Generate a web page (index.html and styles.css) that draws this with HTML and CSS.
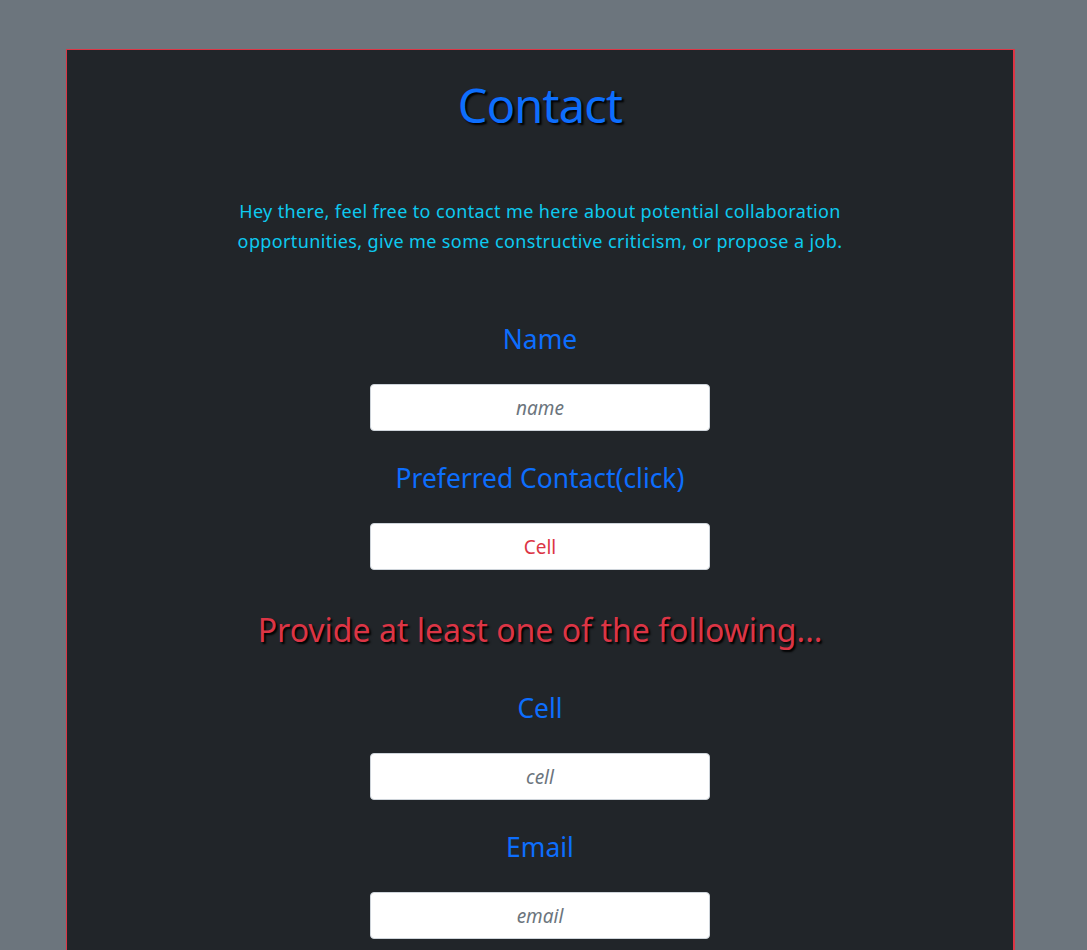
FILE: index.html
```html
<!DOCTYPE html>
<html lang="en">
<head>
<meta charset="utf-8">
<title>Contact</title>
<link rel="stylesheet" href="styles.css">
</head>
<body>
<main class="card">
  <h1 class="title">Contact</h1>
  <p class="intro">Hey there, feel free to contact me here about potential collaboration opportunities, give me some constructive criticism, or propose a job.</p>
  <form class="form">
    <div class="field">
      <label class="label" for="name">Name</label>
      <input class="input" id="name" type="text" placeholder="name">
    </div>
    <div class="field">
      <label class="label" for="pref">Preferred Contact(click)</label>
      <button class="input choice" id="pref" type="button">Cell</button>
    </div>
    <h2 class="warning">Provide at least one of the following...</h2>
    <div class="field">
      <label class="label" for="cell">Cell</label>
      <input class="input" id="cell" type="text" placeholder="cell">
    </div>
    <div class="field">
      <label class="label" for="email">Email</label>
      <input class="input" id="email" type="text" placeholder="email">
    </div>
  </form>
</main>
</body>
</html>
```
FILE: styles.css
```css
html, body {
  margin: 0;
  padding: 0;
}
body {
  background: #6c757d;
  font-family: "Noto Sans", sans-serif;
  padding: 49px 0 0 66px;
  height: 950px;
  box-sizing: border-box;
  overflow: hidden;
}
.card {
  width: 949px;
  box-sizing: border-box;
  min-height: 1000px;
  background: #212529;
  border: 1px solid #dc3545;
  border-right-width: 2px;
  display: flex;
  flex-direction: column;
  align-items: center;
  text-align: center;
}
.title {
  margin: 26px 0 0;
  font-size: 47px;
  font-weight: 400;
  letter-spacing: -0.8px;
  line-height: 58px;
  color: #0d6efd;
  text-shadow: 2px 2px 2px #000;
}
.intro {
  margin: 62px 0 0;
  width: 640px;
  font-size: 18px;
  letter-spacing: 0.38px;
  line-height: 30px;
  color: #0dcaf0;
}
.form {
  display: flex;
  flex-direction: column;
  align-items: center;
  margin-top: 66px;
}
.field {
  display: flex;
  flex-direction: column;
  align-items: center;
}
.field + .field {
  margin-top: 30px;
}
.label {
  font-size: 26.4px;
  line-height: 34px;
  color: #0d6efd;
  margin-bottom: 28px;
}
.input {
  width: 340px;
  height: 47px;
  box-sizing: border-box;
  background: #fff;
  border: 1px solid #ced4da;
  border-radius: 4px;
  font-family: inherit;
  font-size: 19px;
  text-align: center;
  color: #212529;
  padding: 0 12px;
}
.input::placeholder {
  color: #6c757d;
  font-style: italic;
}
.choice {
  color: #dc3545;
  cursor: pointer;
}
.warning {
  margin: 38px 0 39px;
  font-size: 32px;
  font-weight: 400;
  line-height: 44px;
  color: #dc3545;
  text-shadow: 2px 2px 2px #000;
}
```
